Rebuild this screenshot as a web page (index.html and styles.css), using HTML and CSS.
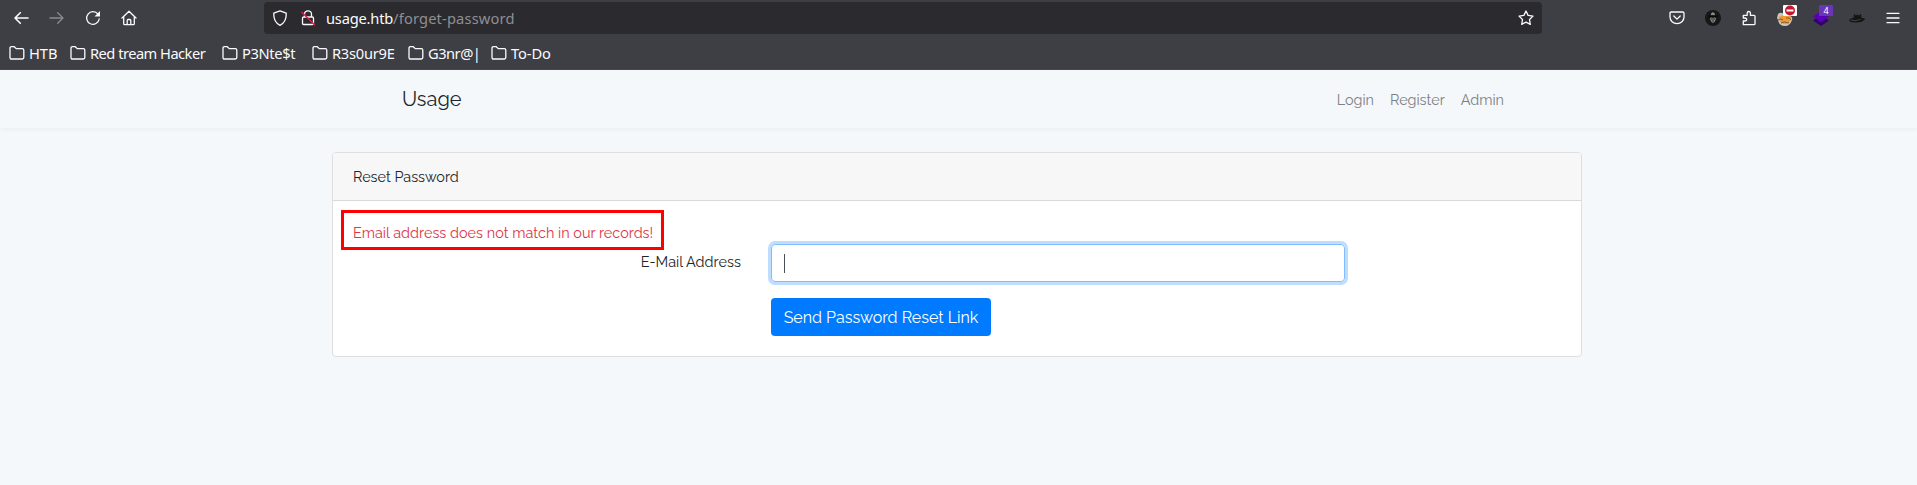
FILE: index.html
```html
<!DOCTYPE html>
<html lang="en">
<head>
<meta charset="utf-8">
<title>Usage</title>
<link rel="stylesheet" href="styles.css">
</head>
<body>
<svg class="defs" width="0" height="0">
  <symbol id="folder" viewBox="0 0 16 16"><path d="M1 12.6V3.2Q1 1.7 2.5 1.7H5.2L7.3 3.7H13.3Q14.8 3.7 14.8 5.2V12.6Q14.8 14 13.3 14H2.5Q1 14 1 12.6Z" fill="none" stroke="#fbfbfe" stroke-width="1.3"/></symbol>
</svg>
<header class="browser">
  <div class="toolbar">
    <div class="controls">
      <svg viewBox="0 0 16 16"><path d="M15 8H2M7.3 2.7L2 8l5.3 5.3" class="line thick"/></svg>
      <svg class="dim" viewBox="0 0 16 16"><path d="M1 8h13M8.7 2.7L14 8l-5.3 5.3" class="line"/></svg>
      <svg viewBox="0 0 16 16"><path d="M13 4.2A6.3 6.3 0 1 0 14.2 9" class="line"/><path d="M15 1v5.5H9.5Z" fill="#fbfbfe"/></svg>
      <svg viewBox="0 0 16 16"><path d="M1 8l7-6.7L15 8M2.7 6.8V13.7q0 1 1 1h8.6q1 0 1-1V6.8M6.2 14.5V10.5q0-1 1-1h1.6q1 0 1 1v4" class="line"/></svg>
    </div>
    <div class="address">
      <svg class="shield" viewBox="0 0 16 16"><path d="M8 .8L14.2 3.2C14.5 9 12.4 13.2 8 15.3C3.6 13.2 1.5 9 1.8 3.2Z" class="line"/></svg>
      <svg class="lock" viewBox="0 0 16 16"><path d="M4.5 7V4.3a3.5 3.5 0 0 1 7 0V7M3.7 7h8.6q1.2 0 1.2 1.2v5.1q0 1.2-1.2 1.2H3.7q-1.2 0-1.2-1.2V8.2Q2.5 7 3.7 7Z" class="line"/><path d="M1.5 2L15 15.2" stroke="#e6194b" stroke-width="1.5"/></svg>
      <span class="url"><b>usage.htb</b>/forget-password</span>
      <svg class="star" viewBox="0 0 16 16"><path d="M8 1l2.1 4.4 4.9.7-3.5 3.4.8 4.9L8 12.1l-4.3 2.3.8-4.9L1 6.1l4.9-.7Z" class="line"/></svg>
    </div>
    <div class="extensions">
      <svg viewBox="0 0 16 16"><path d="M2.3 2h11.4q1.3 0 1.3 1.3V7A7 6.7 0 0 1 1 7V3.3Q1 2 2.3 2ZM4.8 6L8 9.1 11.2 6" class="line"/></svg>
      <svg viewBox="0 0 16 16"><circle cx="8" cy="8" r="8" fill="#171717"/><path d="M5.8 5.3Q6 2.2 8 2.3T10.2 5.3Z" fill="#888"/><path d="M3.2 6.2h9.6" stroke="#080808" stroke-width="1.3"/><path d="M5 8q1.5-1 3 0 1.5-1 3 0-.4 4-3 5-2.6-1-3-5Z" fill="#858585"/><path d="M6 9h4M7 11h2" stroke="#333"/></svg>
      <svg viewBox="0 0 16 16"><path d="M2.3 14.7V11H4q1.7 0 1.7-1.5T4 8H2.3V5.3H6.2V3.1a1.6 1.6 0 0 1 3.2 0v2.2H13q1 0 1 1v7.4q0 1-1 1Z" class="line"/></svg>
      <span class="badged"><svg viewBox="0 0 16 16"><path d="M1 4q2-2 4-1l8 3q3 1 2 4-2 6-7 6-6 0-7-6l-1-2Z" fill="#c9c6bd"/><path d="M2 7q6-4 12 0 0 7-6 7T2 7Z" fill="#ee9a37"/><path d="M1 10q3-2 5 0M9 8q4-1 5 2M4 13q3-2 8 0" fill="none" stroke="#89582d"/></svg><svg class="badge stop" viewBox="0 0 14 11"><rect width="14" height="11" rx="1" fill="#fff"/><circle cx="7" cy="5.5" r="5" fill="#c6162e"/><path d="M3.5 5.5h7" stroke="#fff" stroke-width="2"/></svg></span>
      <span class="badged"><svg viewBox="0 0 16 16"><path d="M0 10.5L8 5l8 5.5L8 16Z" fill="#33006f"/><path d="M0 6.5L8 1l8 5.5L8 12.5Z" fill="#5900b5"/></svg><span class="badge count">4</span></span>
      <svg viewBox="0 0 16 16"><path d="M4.5 8L5 4.2q3-1 7 .1L12.5 8Q16 8 16 9.3 13 12.6 7 12.5.3 12.4.2 10.2.3 8.5 4.5 8Z" fill="#151515"/><path d="M1.5 10q4 2 10-.7M6 4.7q3-.5 5 .2" fill="none" stroke="#55555b" stroke-width=".7"/></svg>
      <svg viewBox="0 0 16 16"><path d="M2 3.3h12M2 8h12M2 12.7h12" class="line"/></svg>
    </div>
  </div>
  <nav class="bookmarks">
    <a class="w1"><svg><use href="#folder"/></svg>HTB</a>
    <a class="w2"><svg><use href="#folder"/></svg>Red tream Hacker</a>
    <a class="w3"><svg><use href="#folder"/></svg>P3Nte$t</a>
    <a class="w4"><svg><use href="#folder"/></svg>R3s0ur9E</a>
    <a class="w5"><svg><use href="#folder"/></svg>G3nr@|</a>
    <a class="w6"><svg><use href="#folder"/></svg>To-Do</a>
  </nav>
</header>
<nav class="navbar">
  <span class="brand">Usage</span>
  <div class="links"><a class="login">Login</a><a class="register">Register</a><a class="admin">Admin</a></div>
</nav>
<main class="card">
  <div class="card-header"><span>Reset Password</span></div>
  <div class="card-body">
    <div class="alert"><span>Email address does not match in our records!</span></div>
    <form class="form">
      <label>E-Mail Address</label>
      <div class="field"><i class="caret"></i></div>
      <button type="button">Send Password Reset Link</button>
    </form>
  </div>
</main>
</body>
</html>
```
FILE: styles.css
```css
* { box-sizing: border-box; }
body {
  margin: 0;
  height: 485px;
  overflow: hidden;
  background: #f4f8fb;
  color: #212529;
  font: 400 14.4px/23px Raleway, Lato, sans-serif;
}
.defs { position: absolute; }
svg { display: block; flex: none; width: 16px; height: 16px; }
.line { fill: none; stroke: #fbfbfe; stroke-width: 1.3; stroke-linecap: round; stroke-linejoin: round; }
.thick { stroke-width: 1.6; }
.dim { opacity: .4; }

.browser { height: 70px; background: #3e3f44; border-bottom: 1px solid #48494e; font: 400 14.67px/20px "Noto Sans", sans-serif; color: #fbfbfe; }
.toolbar { display: flex; height: 36px; align-items: center; }
.controls { display: flex; gap: 20px; width: 264px; padding-left: 13px; }
.address { display: flex; align-items: center; width: 1278px; height: 32px; background: #2b2a2f; border-radius: 4px; padding: 0 8px; }
.lock { margin-left: 12px; }
.url { margin-left: 10px; color: #8f8f94; letter-spacing: .16px; }
.url b { font-weight: 400; color: #fbfbfe; letter-spacing: -.2px; }
.star { margin-left: auto; }
.extensions { display: flex; gap: 20px; padding-left: 127px; }
.badged { position: relative; }
.badge { position: absolute; left: 6px; top: -5px; width: 14px; height: 11px; }
.count { background: #6a35b8; color: #fff; font-size: 9px; line-height: 11px; text-align: center; border-radius: 1px; }
.bookmarks { display: flex; height: 33px; padding-left: 9px; align-items: center; }
.bookmarks a { display: flex; align-items: center; gap: 4px; white-space: nowrap; }
.w1 { width: 61px; }
.w2 { width: 152px; letter-spacing: -.52px; }
.w3 { width: 90px; letter-spacing: -.35px; }
.w4 { width: 96px; letter-spacing: -.25px; }
.w5 { width: 83px; letter-spacing: -.5px; }
.w6 { letter-spacing: -.1px; }

.navbar { display: flex; justify-content: space-between; align-items: center; height: 58px; padding: 1px 413px 0 402px; box-shadow: 0 2px 4px rgba(0,0,0,.04); }
.brand { font-size: 20px; }
.links { display: flex; gap: 16px; color: #7e8082; }

.card { width: 1250px; height: 205px; margin: 24px 0 0 332px; background: #fff; border: 1px solid #dfdfdf; border-radius: 4px; overflow: hidden; }
.card-header { height: 48px; padding: 12px 20px; background: #f7f7f7; border-bottom: 1px solid #d9d9d9; }
.card-body { padding: 9px 8px; }
.alert { width: 323px; height: 40px; padding: 8px 9px 0; border: 3px solid #f00; color: #dc3545; white-space: nowrap; letter-spacing: .03px; }
.form { display: grid; grid-template-columns: 400px 574px; column-gap: 30px; row-gap: 16px; margin-top: -6px; }
.form label { text-align: right; padding-top: 6px; letter-spacing: .05px; }
.field { height: 38px; padding: 9px 12px; border: 1px solid #80bdff; border-radius: 4px; box-shadow: 0 0 0 3px #bfdeff; }
.caret { display: block; width: 1px; height: 19px; background: #495057; }
button { grid-column: 2; width: 220px; height: 38px; padding: 1px 0 0; border: 0; border-radius: 4px; background: #007bff; color: #fff; font: 400 16px/37px Raleway, Lato, sans-serif; }
```
